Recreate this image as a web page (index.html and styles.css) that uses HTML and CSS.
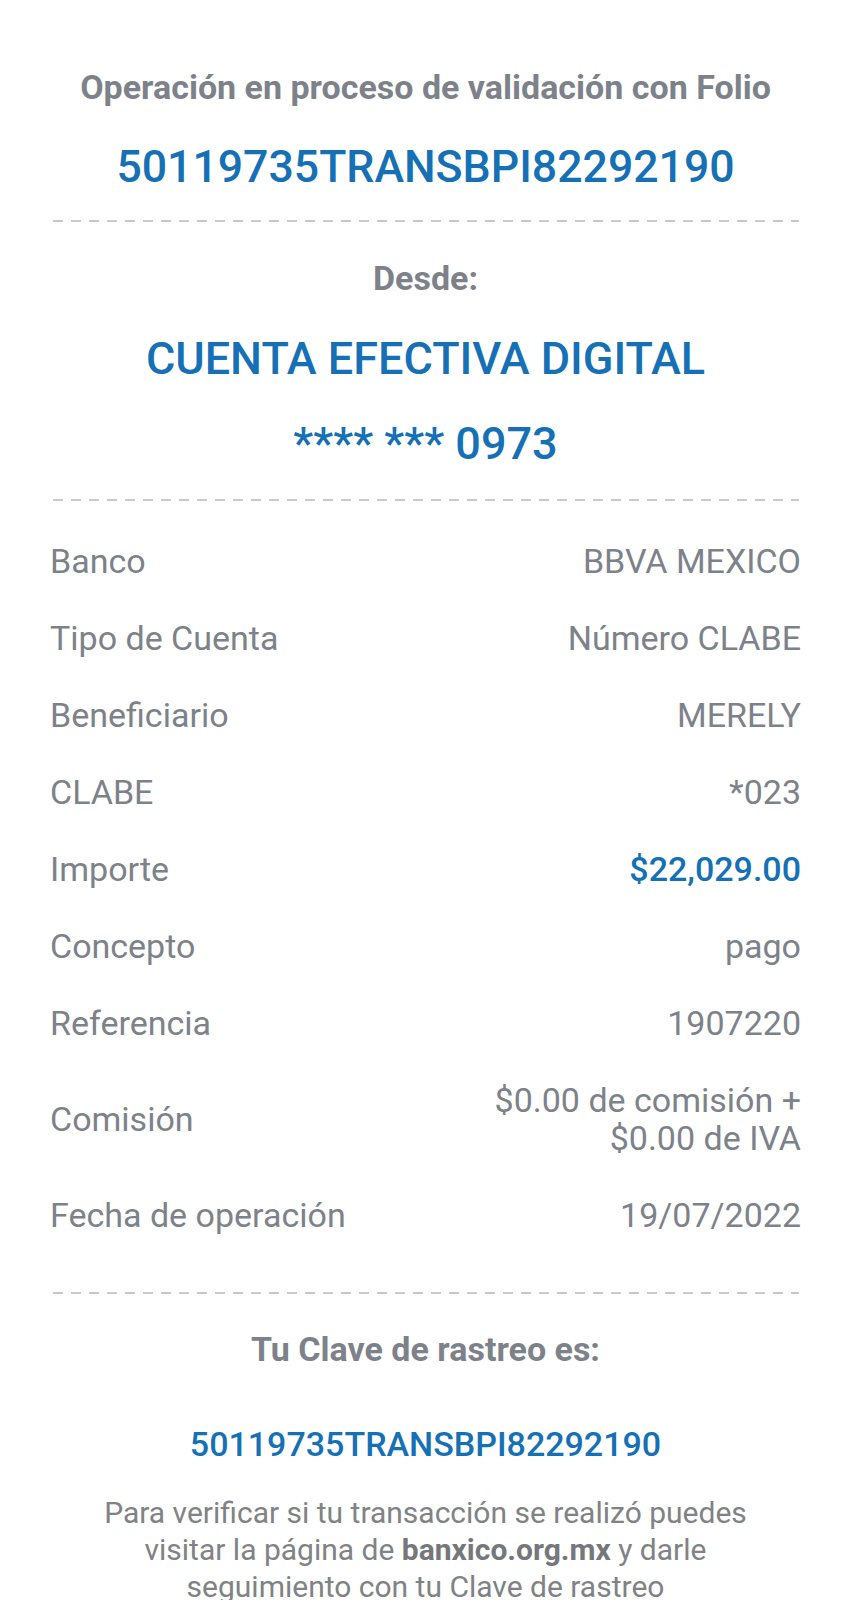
FILE: index.html
```html
<!DOCTYPE html>
<html lang="es">
<head>
<meta charset="utf-8">
<title>Comprobante</title>
<link rel="stylesheet" href="styles.css">
</head>
<body>
<main class="receipt">
  <section class="head">
    <p class="title">Operación en proceso de validación con Folio</p>
    <p class="folio">50119735TRANSBPI82292190</p>
  </section>
  <hr class="dash">
  <section class="from">
    <p class="subtitle">Desde:</p>
    <p class="account">CUENTA EFECTIVA DIGITAL</p>
    <p class="account number">**** *** 0973</p>
  </section>
  <hr class="dash">
  <section class="details">
    <div class="row"><span class="label">Banco</span><span class="value">BBVA MEXICO</span></div>
    <div class="row"><span class="label">Tipo de Cuenta</span><span class="value">Número CLABE</span></div>
    <div class="row"><span class="label">Beneficiario</span><span class="value">MERELY</span></div>
    <div class="row"><span class="label">CLABE</span><span class="value">*023</span></div>
    <div class="row"><span class="label">Importe</span><span class="value amount">$22,029.00</span></div>
    <div class="row"><span class="label">Concepto</span><span class="value">pago</span></div>
    <div class="row"><span class="label">Referencia</span><span class="value">1907220</span></div>
    <div class="row"><span class="label">Comisión</span><span class="value">$0.00 de comisión +<br>$0.00 de IVA</span></div>
    <div class="row"><span class="label">Fecha de operación</span><span class="value">19/07/2022</span></div>
  </section>
  <hr class="dash">
  <section class="tracking">
    <p class="subtitle">Tu Clave de rastreo es:</p>
    <p class="code">50119735TRANSBPI82292190</p>
    <p class="note">Para verificar si tu transacción se realizó puedes visitar la página de <b>banxico.org.mx</b> y darle seguimiento con tu Clave de rastreo</p>
  </section>
</main>
</body>
</html>
```
FILE: styles.css
```css
html, body {
  margin: 0;
  padding: 0;
  background: #ffffff;
}
body {
  font-family: Roboto, "Liberation Sans", sans-serif;
  color: #7d828a;
}
p { margin: 0; }
.receipt {
  padding: 67px 50px 0;
  text-align: center;
}
.title {
  font-size: 34px;
  font-weight: 700;
  line-height: 40px;
}
.folio {
  margin-top: 34px;
  font-size: 44.6px;
  font-weight: 500;
  line-height: 52px;
  color: #1570b5;
}
.dash {
  margin: 27px 2px 0 3px;
  height: 2px;
  border: 0;
  background: repeating-linear-gradient(to right, #c8c9cc 0 10px, transparent 10px 18px);
}
.from { padding-top: 36px; }
.subtitle {
  font-size: 34px;
  font-weight: 700;
  line-height: 40px;
}
.account {
  margin-top: 35px;
  font-size: 45px;
  font-weight: 500;
  line-height: 52px;
  color: #1570b5;
}
.account.number { margin-top: 33px; }
.from + .dash { margin-top: 29px; }
.details { padding-top: 21px; }
.row {
  display: flex;
  justify-content: space-between;
  align-items: center;
  padding: 19.5px 0;
  font-size: 34px;
  line-height: 38px;
}
.row-multi { padding: 18.5px 0; }
.value { text-align: right; }
.amount { color: #1570b5; font-weight: 500; }
.details + .dash { margin-top: 39px; }
.tracking { padding-top: 35px; }
.code {
  margin-top: 53px;
  font-size: 34px;
  font-weight: 500;
  line-height: 44px;
  color: #1570b5;
}
.note {
  margin: 28px auto 0;
  max-width: 690px;
  font-size: 30px;
  line-height: 37px;
  color: #808285;
}
.note b { font-weight: 700; color: #75777b; }
```
